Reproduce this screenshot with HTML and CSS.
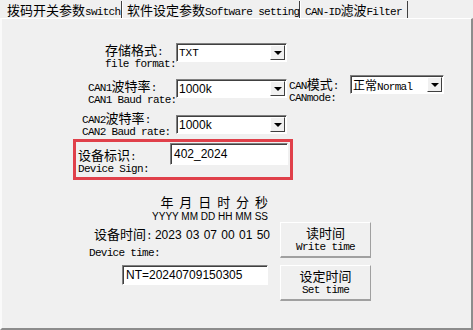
FILE: index.html
```html
<!DOCTYPE html>
<html lang="zh-CN">
<head>
    <meta charset="UTF-8">
    <link rel="stylesheet" href="styles.css">
</head>
<body>

<!-- Tab strip -->
<div class="tabs">
    <div class="tab active">拨码开关参数<span class="en">switch</span></div>
    <div class="tab">软件设定参数<span class="en">Software setting</span></div>
    <div class="tab"><span class="en">CAN-ID</span>滤波<span class="en">Filter</span></div>
</div>

<div class="panel">

    <!-- File format -->
    <div class="row row-format">
        <div class="label">
            <div class="cn">存储格式<span class="en">:</span></div>
            <div class="en sub">file format:</div>
        </div>
        <div class="combo w-main"><span class="val en">TXT</span><span class="arrow"></span></div>
    </div>

    <!-- CAN1 + mode -->
    <div class="row row-can1">
        <div class="label">
            <div class="cn"><span class="en">CAN1</span>波特率<span class="en">:</span></div>
            <div class="en sub">CAN1 Baud rate:</div>
        </div>
        <div class="combo w-main"><span class="val num">1000k</span><span class="arrow"></span></div>
        <div class="label label-mode">
            <div class="cn"><span class="en">CAN</span>模式<span class="en">:</span></div>
            <div class="en sub">CANmode:</div>
        </div>
        <div class="combo w-mode"><span class="val">正常<span class="en">Normal</span></span><span class="arrow"></span></div>
    </div>

    <!-- CAN2 -->
    <div class="row row-can2">
        <div class="label">
            <div class="cn"><span class="en">CAN2</span>波特率<span class="en">:</span></div>
            <div class="en sub">CAN2 Baud rate:</div>
        </div>
        <div class="combo w-main combo-can2"><span class="val num">1000k</span><span class="arrow"></span></div>
    </div>

    <!-- Device sign (highlighted) -->
    <div class="highlight">
        <div class="label">
            <div class="cn">设备标识<span class="en">:</span></div>
            <div class="en sub">Device Sign:</div>
        </div>
        <div class="edit edit-sign num">402_2024</div>
    </div>

    <!-- Device time -->
    <div class="time-area">
        <div class="time-left">
            <div class="t-head cn">年 月 日 时 分 秒</div>
            <div class="t-fmt">YYYY MM DD HH MM SS</div>
            <div class="t-now"><span class="cn">设备时间<span class="en">:</span></span><span class="num digits">2023 03 07 00 01 50</span></div>
            <div class="en t-sub">Device time:</div>
            <div class="edit edit-time num">NT=20240709150305</div>
        </div>
        <div class="buttons">
            <div class="btn"><div class="cn">读时间</div><div class="en">Write time</div></div>
            <div class="btn"><div class="cn">设定时间</div><div class="en">Set time</div></div>
        </div>
    </div>

</div>

</body>
</html>
```

FILE: styles.css
```css
body {
    margin: 0;
    padding: 0;
    width: 473px;
    height: 330px;
    background-color: #f0f0f0;
    color: #000;
    font-family: "Noto Sans CJK SC", sans-serif;
    font-size: 13px;
    overflow: hidden;
}

.en {
    font-family: "Liberation Mono", monospace;
    font-size: 11px;
    letter-spacing: -0.7px;
}
.num {
    font-family: "Liberation Sans", Arial, sans-serif;
    font-size: 11px;
}
.cn {
    font-size: 13px;
    line-height: 14px;
}

/* Tab strip */
.tabs {
    display: flex;
    height: 18px;
    padding-top: 1px;
    box-sizing: border-box;
}
.tab {
    height: 17px;
    line-height: 17px;
    padding: 0 2px 0 4px;
    border-left: 1px solid #fff;
    border-right: 1px solid #404040;
    box-sizing: border-box;
    white-space: nowrap;
}
.tab.active {
    width: 122px;
    padding-left: 6px;
    border-left: 1px solid #f0f0f0;
}
.tab:nth-child(2) { width: 178px; }
.tab:nth-child(3) { width: 108px; }

/* Main panel */
.panel {
    height: 312px;
    box-sizing: border-box;
    border-top: 1px solid #fff;
    border-left: 2px solid #fafafa;
    border-right: 2px solid #8c8c8c;
    border-bottom: 2px solid #8c8c8c;
}

.row {
    display: flex;
    align-items: flex-start;
}
.label {
    flex-shrink: 0;
    white-space: nowrap;
}
.label .sub {
    line-height: 11px;
}

/* Combo boxes */
.combo {
    display: flex;
    flex-shrink: 0;
    align-items: center;
    height: 19px;
    box-sizing: border-box;
    background: #fff;
    border-top: 1px solid #808080;
    border-left: 1px solid #808080;
    border-right: 1px solid #fff;
    border-bottom: 1px solid #fff;
    box-shadow: inset 1px 1px 0 #404040;
    padding-left: 2px;
}
.combo .val {
    flex: 1;
    white-space: nowrap;
    font-size: 12px;
}
.combo .val.en {
    font-size: 11px;
    letter-spacing: 0;
}
.combo .arrow {
    width: 15px;
    height: 15px;
    margin-right: 1px;
    background: #f0f0f0;
    border-top: 1px solid #fff;
    border-left: 1px solid #fff;
    border-right: 1px solid #404040;
    border-bottom: 1px solid #404040;
    box-sizing: border-box;
    position: relative;
}
.combo .arrow::after {
    content: "";
    position: absolute;
    left: 3px;
    top: 5px;
    border-left: 4px solid transparent;
    border-right: 4px solid transparent;
    border-top: 4px solid #000;
}
.w-main { width: 111px; }
.w-mode {
    width: 94px;
    margin-top: -4px;
}

/* Row placement */
.row-format {
    padding-top: 24px;
    padding-left: 103px;
}
.row-format .label { width: 71px; }

.row-can1 {
    padding-top: 9px;
    padding-left: 86px;
}
.row-can1 .label { width: 88px; }
.row-can1 .label-mode {
    width: 61px;
    margin-left: 2px;
    margin-top: -2px;
}

.row-can2 {
    padding-top: 5px;
    padding-left: 80px;
}
.row-can2 .label { width: 94px; }
.combo-can2 { margin-top: 4px; }

/* Highlighted device sign */
.highlight {
    display: flex;
    align-items: flex-start;
    width: 220px;
    height: 41px;
    box-sizing: border-box;
    margin-left: 71px;
    margin-top: 1px;
    border: 3px solid #e0404a;
    padding: 6px 0 0 2px;
}
.highlight .label { width: 92px; }
.edit {
    height: 22px;
    line-height: 20px;
    box-sizing: border-box;
    background: #fff;
    border-top: 1px solid #808080;
    border-left: 1px solid #808080;
    border-right: 1px solid #fff;
    border-bottom: 1px solid #fff;
    box-shadow: inset 1px 1px 0 #404040;
    padding-left: 3px;
    white-space: nowrap;
}
.edit-sign {
    width: 118px;
    margin-top: -5px;
    font-size: 12px;
}

/* Time section */
.time-area {
    display: flex;
    padding-top: 15px;
}
.time-left {
    width: 266px;
    flex-shrink: 0;
    display: flex;
    flex-direction: column;
    align-items: flex-end;
    white-space: nowrap;
}
.t-head {
    word-spacing: 3px;
    line-height: 14px;
}
.t-fmt {
    font-family: "Liberation Sans Narrow", "Liberation Sans", sans-serif;
    font-size: 10px;
    line-height: 12px;
    margin-top: 2px;
}
.t-now {
    margin-top: 4px;
    display: flex;
    align-items: baseline;
    align-self: flex-start;
    padding-left: 92px;
}
.digits {
    font-size: 12px;
    word-spacing: 1px;
    margin-left: 3px;
}
.t-sub {
    align-self: flex-start;
    padding-left: 87px;
    margin-top: 5px;
    line-height: 11px;
}
.edit-time {
    width: 146px;
    height: 20px;
    line-height: 18px;
    margin-top: 6px;
    font-size: 12px;
}

.buttons {
    display: flex;
    flex-direction: column;
    gap: 7px;
    margin-left: 12px;
    padding-top: 27px;
}
.btn {
    width: 91px;
    height: 36px;
    box-sizing: border-box;
    border-top: 1px solid #fff;
    border-left: 1px solid #fff;
    border-right: 1px solid #a0a0a0;
    border-bottom: 2px solid #a0a0a0;
    text-align: center;
    padding-top: 1px;
}
.btn .cn { line-height: 17px; }
.btn .en { line-height: 13px; }
```
